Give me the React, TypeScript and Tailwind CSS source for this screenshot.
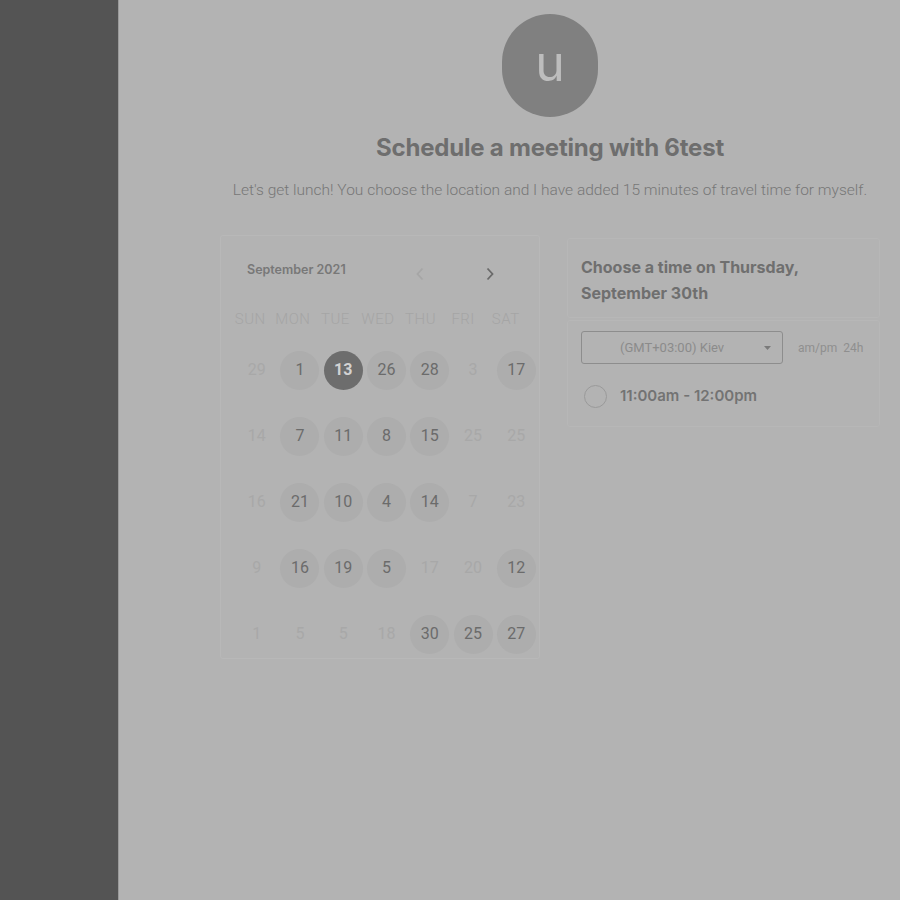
import React from 'react';

type Day = { n: string; on?: boolean; sel?: boolean };

const rows: Day[][] = [
  [{ n: '29' }, { n: '1', on: true }, { n: '13', on: true, sel: true }, { n: '26', on: true }, { n: '28', on: true }, { n: '3' }, { n: '17', on: true }],
  [{ n: '14' }, { n: '7', on: true }, { n: '11', on: true }, { n: '8', on: true }, { n: '15', on: true }, { n: '25' }, { n: '25' }],
  [{ n: '16' }, { n: '21', on: true }, { n: '10', on: true }, { n: '4', on: true }, { n: '14', on: true }, { n: '7' }, { n: '23' }],
  [{ n: '9' }, { n: '16', on: true }, { n: '19', on: true }, { n: '5', on: true }, { n: '17' }, { n: '20' }, { n: '12', on: true }],
  [{ n: '1' }, { n: '5' }, { n: '5' }, { n: '18' }, { n: '30', on: true }, { n: '25', on: true }, { n: '27', on: true }],
];

const weekdays = ['SUN', 'MON', 'TUE', 'WED', 'THU', 'FRI', 'SAT'];

const Chevron = ({ dir, className }: { dir: 'left' | 'right'; className: string }) => (
  <svg width="10" height="14" viewBox="0 0 10 14" className={className}>
    <path
      d={dir === 'left' ? 'M7.5 1.5 L2.5 7 L7.5 12.5' : 'M2.5 1.5 L7.5 7 L2.5 12.5'}
      fill="none"
      stroke="currentColor"
      strokeWidth="1.8"
    />
  </svg>
);

const Calendar = () => {
  return (
    <div className="w-[320px] h-[424px] border border-[#b8b8b8] rounded-[3px] font-['Roboto',sans-serif]">
      <div className="flex items-center h-[66px] pt-[3px] pl-[26px]">
        <span className="font-['Inter',sans-serif] text-[12.5px] font-semibold text-[#787878] w-[168px]">September 2021</span>
        <Chevron dir="left" className="text-[#a6a6a6] mt-[6px]" />
        <span className="w-[60px]" />
        <Chevron dir="right" className="text-[#6a6a6a] mt-[6px]" />
      </div>
      <div className="grid grid-cols-7 ml-[8px] w-[298px] h-[30px] mt-[2px] items-center text-[15px] font-light text-[#a5a5a5] tracking-[0.5px]">
        {weekdays.map((w) => (
          <div key={w} className="text-center">{w}</div>
        ))}
      </div>
      <div className="ml-[14px] w-[303px] pt-[3px]">
        {rows.map((r, i) => (
          <div key={i} className="grid grid-cols-7 h-[66px] items-center">
            {r.map((d, j) => (
              <div key={j} className="flex justify-center">
                <div
                  className={
                    d.sel
                      ? 'w-[39px] h-[39px] rounded-full bg-[#6d6d6d] text-[#d2d2d2] font-bold text-[16px] flex items-center justify-center'
                      : d.on
                      ? 'w-[39px] h-[39px] rounded-full bg-[#adadad] text-[#6b6b6b] text-[16px] flex items-center justify-center'
                      : 'w-[39px] h-[39px] text-[#a8a8a8] text-[16px] flex items-center justify-center'
                  }
                >
                  {d.n}
                </div>
              </div>
            ))}
          </div>
        ))}
      </div>
    </div>
  );
};

const TimePanel = () => {
  return (
    <div className="w-[313px] flex flex-col gap-[2px] pt-[3px]">
      <div className="border border-[#b7b7b7] rounded-[3px] px-[13px] pt-[15px] pb-[11px] font-['Inter',sans-serif] text-[16px] font-bold leading-[26px] text-[#6f6f6f]">
        Choose a time on Thursday,
        <br />
        September 30th
      </div>
      <div className="border border-[#b7b7b7] rounded-[3px] pl-[13px] pr-[12px] pt-[10px] pb-[18px]">
        <div className="flex items-center">
          <div className="w-[202px] h-[33px] border border-[#8d8d8d] rounded-[3px] flex items-center pl-[38px] pr-[11px] font-['Roboto',sans-serif] text-[13px] text-[#8b8b8b]">
            <span className="flex-1">(GMT+03:00) Kiev</span>
            <svg width="7" height="4" viewBox="0 0 7 4">
              <path d="M0 0 L7 0 L3.5 4 Z" fill="#7a7a7a" />
            </svg>
          </div>
          <span className="ml-[15px] font-['Roboto',sans-serif] text-[12px] text-[#8f8f8f]">am/pm&nbsp;&nbsp;24h</span>
        </div>
        <div className="flex items-center mt-[21px] pl-[3px]">
          <div className="w-[23px] h-[23px] rounded-full border border-[#9a9a9a]" />
          <span className="ml-[13px] font-['Inter',sans-serif] text-[15px] font-semibold text-[#737373]">11:00am - 12:00pm</span>
        </div>
      </div>
    </div>
  );
};

export default function App() {
  return (
    <div className="flex min-h-[900px] w-[900px] overflow-hidden">
      <div className="w-[119px] shrink-0 bg-[#545454] border-r border-[#9a9a9a]" />
      <div className="flex-1 bg-[#b3b3b3] pl-[101px]">
        <div className="w-[660px] flex flex-col items-center pt-[14px]">
          <div className="w-[96px] h-[103px] rounded-full bg-[#808080] flex items-center justify-center font-['Inter',sans-serif] text-[50px] text-[#bdbdbd] leading-none pb-[6px]">
            u
          </div>
          <h1 className="mt-[15px] font-['Inter',sans-serif] text-[24px] font-bold text-[#6e6e6e] leading-[32px] tracking-[-0.2px]">
            Schedule a meeting with 6test
          </h1>
          <p className="mt-[16px] font-['Roboto',sans-serif] text-[15.5px] font-light text-[#777777] leading-[20px]">
            Let's get lunch! You choose the location and I have added 15 minutes of travel time for myself.
          </p>
          <div className="flex justify-between w-[660px] mt-[35px]">
            <Calendar />
            <TimePanel />
          </div>
        </div>
      </div>
    </div>
  );
}
